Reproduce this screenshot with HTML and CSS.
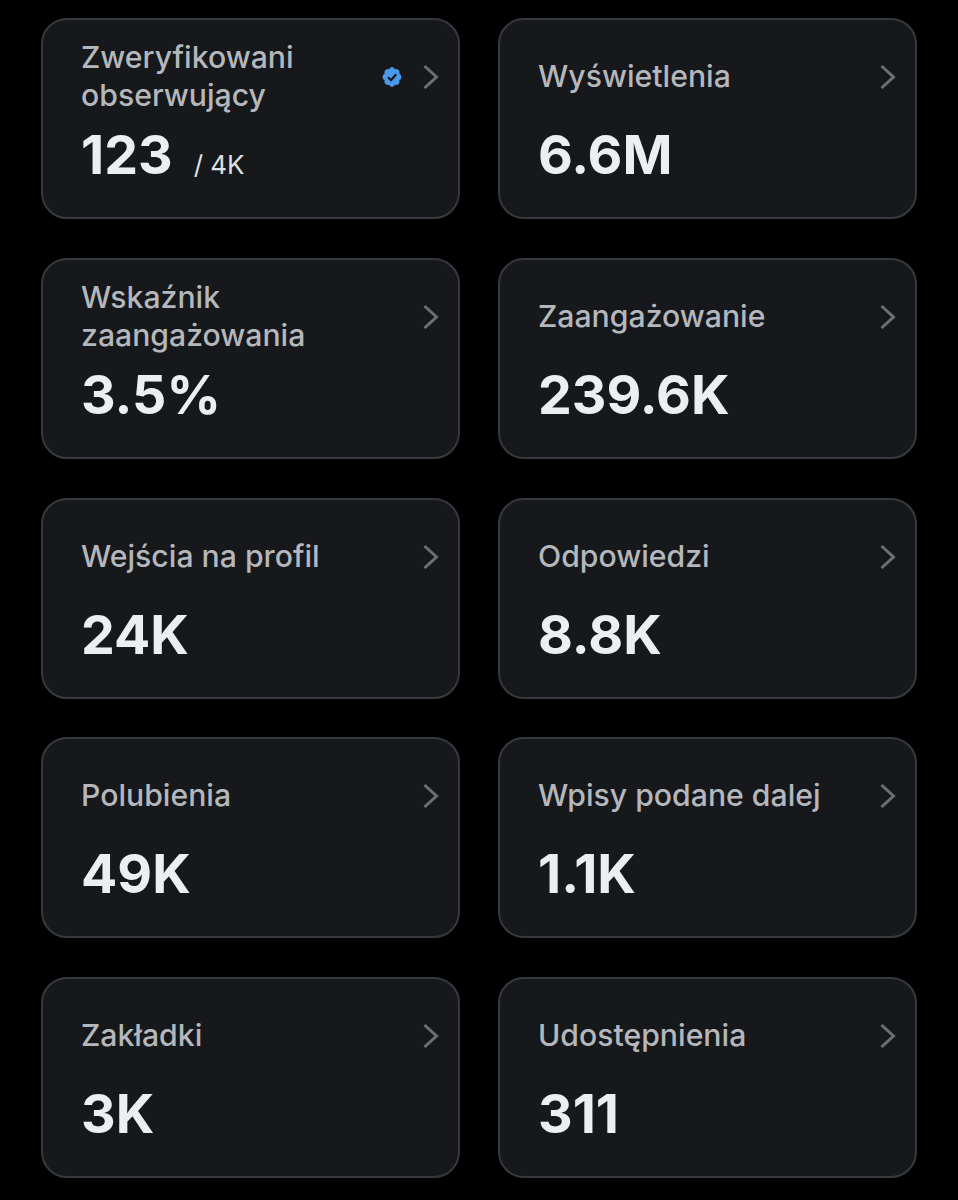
FILE: index.html
```html
<!DOCTYPE html>
<html lang="pl">
<head><meta charset="utf-8"><title>Statystyki</title><link rel="stylesheet" href="styles.css"></head>
<body>
<main class="grid">
<section class="card"><div class="head"><h2 class="label">Zweryfikowani obserwujący</h2><svg class="badge" viewBox="0 0 22 22"><path fill="#4a99e9" d="M20.4 11c0-1.4-.8-2.700-2.100-3.300.5-1.300.2-2.800-.8-3.700-1-1-2.400-1.300-3.700-.8C13.200 1.900 11.900 1.100 11 1.100S8.800 1.900 8.200 3.200C6.900 2.700 5.500 3 4.500 4c-1 .9-1.300 2.400-.8 3.700C2.400 8.300 1.600 9.600 1.600 11s.8 2.700 2.100 3.300c-.5 1.300-.2 2.800.8 3.700 1 1 2.400 1.300 3.700.8.600 1.300 1.900 2.100 2.800 2.100s2.200-.8 2.800-2.100c1.300.5 2.700.2 3.700-.8 1-.9 1.300-2.400.8-3.700 1.300-.6 2.100-1.900 2.100-3.300z"/><path fill="none" stroke="#16181c" stroke-width="2.200" d="M7 11.200l3 3 5.200-6"/></svg><svg class="chev" viewBox="0 0 18 26"><path d="M2.500 2l12 11-12 11"/></svg></div><p class="value">123<span class="of">/ 4K</span></p></section>
<section class="card"><div class="head"><h2 class="label">Wyświetlenia</h2><svg class="chev" viewBox="0 0 18 26"><path d="M2.500 2l12 11-12 11"/></svg></div><p class="value">6.6M</p></section>
<section class="card"><div class="head"><h2 class="label">Wskaźnik zaangażowania</h2><svg class="chev" viewBox="0 0 18 26"><path d="M2.500 2l12 11-12 11"/></svg></div><p class="value">3.5%</p></section>
<section class="card"><div class="head"><h2 class="label">Zaangażowanie</h2><svg class="chev" viewBox="0 0 18 26"><path d="M2.500 2l12 11-12 11"/></svg></div><p class="value">239.6K</p></section>
<section class="card"><div class="head"><h2 class="label">Wejścia na profil</h2><svg class="chev" viewBox="0 0 18 26"><path d="M2.500 2l12 11-12 11"/></svg></div><p class="value">24K</p></section>
<section class="card"><div class="head"><h2 class="label">Odpowiedzi</h2><svg class="chev" viewBox="0 0 18 26"><path d="M2.500 2l12 11-12 11"/></svg></div><p class="value">8.8K</p></section>
<section class="card"><div class="head"><h2 class="label">Polubienia</h2><svg class="chev" viewBox="0 0 18 26"><path d="M2.500 2l12 11-12 11"/></svg></div><p class="value">49K</p></section>
<section class="card"><div class="head"><h2 class="label">Wpisy podane dalej</h2><svg class="chev" viewBox="0 0 18 26"><path d="M2.500 2l12 11-12 11"/></svg></div><p class="value">1.1K</p></section>
<section class="card"><div class="head"><h2 class="label">Zakładki</h2><svg class="chev" viewBox="0 0 18 26"><path d="M2.500 2l12 11-12 11"/></svg></div><p class="value">3K</p></section>
<section class="card"><div class="head"><h2 class="label">Udostępnienia</h2><svg class="chev" viewBox="0 0 18 26"><path d="M2.500 2l12 11-12 11"/></svg></div><p class="value">311</p></section>
</main>
</body>
</html>
```
FILE: styles.css
```css
html,body{margin:0;background:#000}
body{height:1200px;overflow:hidden;font-family:Inter,"Liberation Sans",sans-serif}
.grid{display:grid;grid-template-columns:419px 419px;column-gap:38px;row-gap:38.75px;padding:18px 0 0 40.500px}
.card{box-sizing:border-box;height:201px;background:#16181c;border:2px solid #36393d;border-radius:26px;padding:17px 18px 0 38.500px;display:flex;flex-direction:column}
.head{display:flex;align-items:center;height:78px}
.label{margin:0;flex:1;max-width:300px;font-size:30.200px;line-height:38px;font-weight:450;color:#b4b7bb}
.badge{width:22px;height:22px;margin-left:auto;margin-right:19px;position:relative;top:1px}
.chev{width:18px;height:26px;margin-left:auto;flex:none;position:relative;top:1px}
.badge+.chev{margin-left:0}
.chev path{fill:none;stroke:#6c7075;stroke-width:3}
.value{margin:0;font-size:53.700px;line-height:60px;font-weight:700;color:#eceef0;display:flex;align-items:baseline;margin-top:10px}
.of{font-size:26px;font-weight:400;margin-left:21px;color:#dfe1e3}
```
